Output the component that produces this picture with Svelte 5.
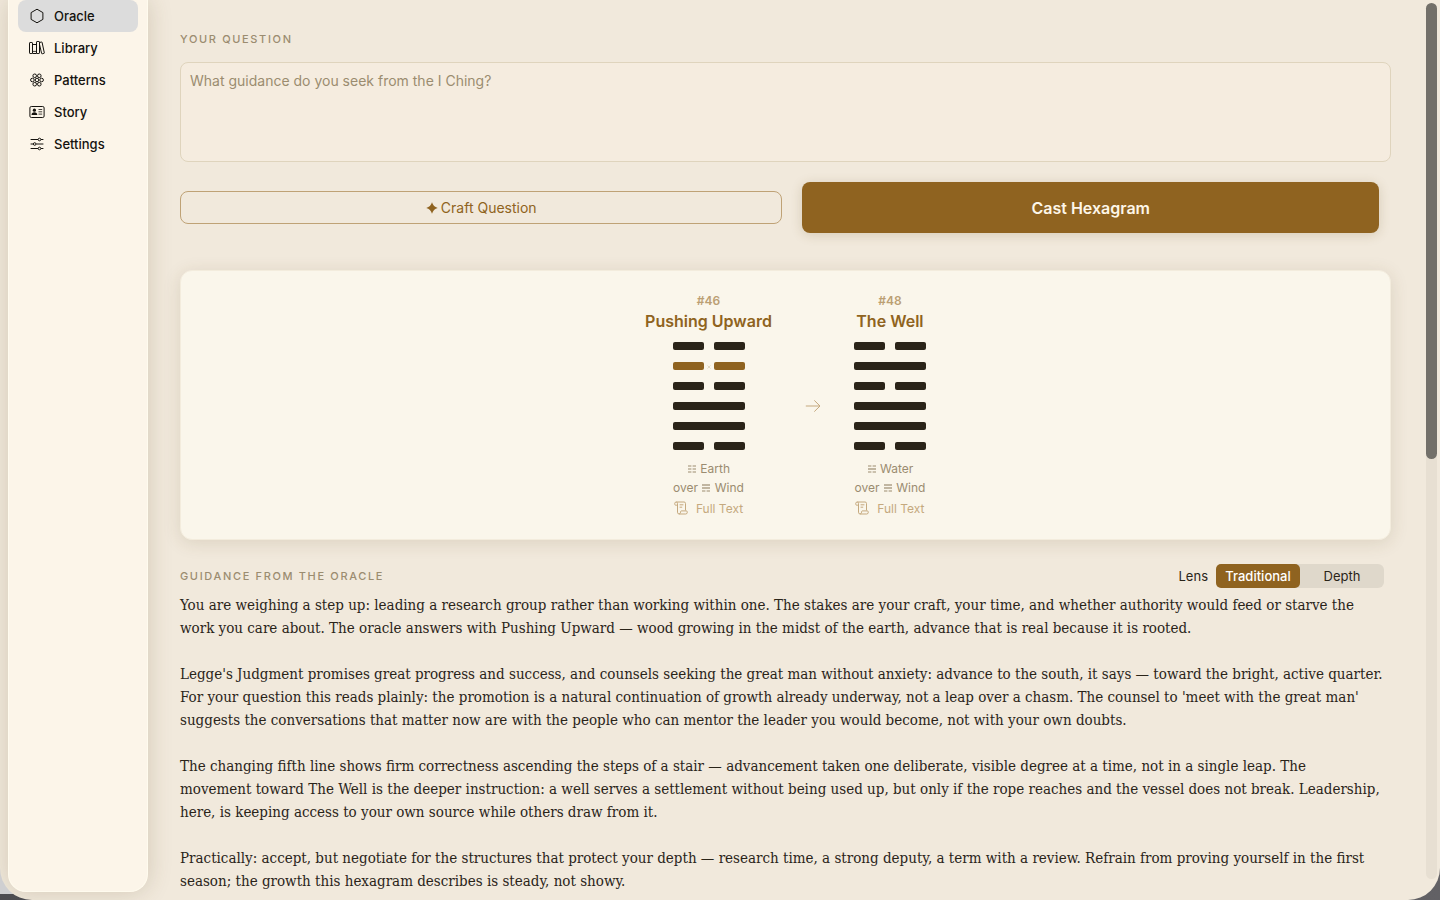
<script>
  let question = $state('');
  let active = $state('Oracle');
  let lens = $state('Traditional');

  const pages = ['Oracle', 'Library', 'Patterns', 'Story', 'Settings'];
  const lenses = ['Traditional', 'Depth'];

  // lines run from top to bottom, 1 = solid, 0 = broken
  const hexagrams = [
    {
      number: 46,
      name: 'Pushing Upward',
      lines: [0, 0, 0, 1, 1, 0],
      changing: 1,
      upper: { name: 'Earth', lines: [0, 0, 0] },
      lower: { name: 'Wind', lines: [1, 1, 0] },
    },
    {
      number: 48,
      name: 'The Well',
      lines: [0, 1, 0, 1, 1, 0],
      changing: -1,
      upper: { name: 'Water', lines: [0, 1, 0] },
      lower: { name: 'Wind', lines: [1, 1, 0] },
    },
  ];

  const guidance = [
    `You are weighing a step up: leading a research group rather than working within one. The stakes are your craft, your time, and whether authority would feed or starve the
work you care about. The oracle answers with Pushing Upward — wood growing in the midst of the earth, advance that is real because it is rooted.`,
    `Legge's Judgment promises great progress and success, and counsels seeking the great man without anxiety: advance to the south, it says — toward the bright, active quarter.
For your question this reads plainly: the promotion is a natural continuation of growth already underway, not a leap over a chasm. The counsel to 'meet with the great man'
suggests the conversations that matter now are with the people who can mentor the leader you would become, not with your own doubts.`,
    `The changing fifth line shows firm correctness ascending the steps of a stair — advancement taken one deliberate, visible degree at a time, not in a single leap. The
movement toward The Well is the deeper instruction: a well serves a settlement without being used up, but only if the rope reaches and the vessel does not break. Leadership,
here, is keeping access to your own source while others draw from it.`,
    `Practically: accept, but negotiate for the structures that protect your depth — research time, a strong deputy, a term with a review. Refrain from proving yourself in the first
season; the growth this hexagram describes is steady, not showy.`,
  ];
</script>

{#snippet trigram(lines)}
  <svg class="trigram" viewBox="0 0 8 8" aria-hidden="true">
    {#each lines as line, i}
      <path d={line ? `M0 ${i * 3 + 1}h8` : `M0 ${i * 3 + 1}h3.4M4.6 ${i * 3 + 1}h3.4`} />
    {/each}
  </svg>
{/snippet}

<div class="desktop">
  <div class="window">
    <nav class="sidebar">
      {#each pages as page}
        <button
          type="button"
          class="nav-item"
          class:active={active === page}
          onclick={() => (active = page)}>
          <svg viewBox="0 0 16 16" aria-hidden="true">
            {#if page === 'Oracle'}
              <path d="M8 1.2 13.9 4.6v6.8L8 14.8 2.1 11.4V4.6z" />
            {:else if page === 'Library'}
              <rect x=".5" y="2.5" width="3" height="11" rx=".6" />
              <rect x="3.5" y="4.5" width="4" height="9" rx=".5" />
              <rect x="7.5" y="1.5" width="3" height="12" rx=".6" />
              <path d="M10.5 2.5l2-.5q.5-.1.6.4l2.2 10.4q.1.5-.4.6l-1.7.4q-.5.1-.6-.4L10.5 4.4" />
              <path class="thin" d="M3.6 11.4h3.8" />
            {:else if page === 'Patterns'}
              <circle cx="8" cy="8" r="1.8" />
              <circle cx="3.4" cy="8" r="1.8" />
              <circle cx="12.6" cy="8" r="1.8" />
              <circle cx="5.7" cy="3.8" r="1.8" />
              <circle cx="10.3" cy="3.8" r="1.8" />
              <circle cx="5.7" cy="12.2" r="1.8" />
              <circle cx="10.3" cy="12.2" r="1.8" />
            {:else if page === 'Story'}
              <rect x=".9" y="2.5" width="14.2" height="11" rx="1.4" />
              <circle class="solid" cx="5.4" cy="6.2" r="1.6" />
              <path class="solid" d="M2.5 11q.2-2.8 2.9-2.8T8.3 11z" />
              <path class="thin" d="M9.5 5.5h3.7M9.5 7.8h3.7M9.5 10.1h3.7" />
            {:else}
              <path d="M1.6 3.5h7.4M12 3.5h2.4M1.6 8h2.6M7.2 8h7.2M1.6 12.5h7.4M12 12.5h2.4" />
              <circle cx="10.5" cy="3.5" r="1.3" />
              <circle cx="5.7" cy="8" r="1.3" />
              <circle cx="10.5" cy="12.5" r="1.3" />
            {/if}
          </svg>
          {page}
        </button>
      {/each}
    </nav>

    <main>
      <label class="caption" for="question">YOUR QUESTION</label>
      <textarea
        id="question"
        placeholder="What guidance do you seek from the I Ching?"
        bind:value={question}></textarea>

      <div class="actions">
        <button type="button" class="craft">
          <svg viewBox="0 0 12 12" aria-hidden="true">
            <path d="M6 .3Q7.3 4.7 11.7 6 7.3 7.3 6 11.7 4.7 7.3.3 6 4.7 4.7 6 .3z" />
          </svg>
          Craft Question
        </button>
        <button type="button" class="cast">Cast Hexagram</button>
      </div>

      <section class="reading">
        {#each hexagrams as hexagram, i}
          {#if i > 0}
            <svg class="arrow" viewBox="0 0 16 16" aria-hidden="true">
              <path d="M.8 8h14M9.3 2.4 15 8l-5.7 5.6" />
            </svg>
          {/if}
          <div class="hexagram">
            <span class="number">#{hexagram.number}</span>
            <h2>{hexagram.name}</h2>
            <div class="lines">
              {#each hexagram.lines as solid, row}
                <div class="line" class:changing={row === hexagram.changing}>
                  <i></i>
                  {#if !solid}
                    {#if row === hexagram.changing}
                      <svg viewBox="0 0 4 4" aria-hidden="true"><path d="M.5.5l3 3M3.5.5l-3 3" /></svg>
                    {/if}
                    <i></i>
                  {/if}
                </div>
              {/each}
            </div>
            <p class="trigrams">
              <span>{@render trigram(hexagram.upper.lines)} {hexagram.upper.name}</span>
              <span>over {@render trigram(hexagram.lower.lines)} {hexagram.lower.name}</span>
            </p>
            <button type="button" class="full-text">
              <svg viewBox="0 0 14 14" aria-hidden="true">
                <path d="M2.9 4.2H1.6Q.7 4.2.7 2.6T2.3 1h7.8q1.4 0 1.4 1.5v6.9M2.3 1q1.2 0 1.2 1.6v8.6q0 1.8 1.6 1.8h6.6q1.6 0 1.6-1.8 0-1.3-1-1.3H7.2q-.6 0-.6 1.3T5.1 13M5.6 3.8h3.8M5.6 6.2h2.6" />
              </svg>
              Full Text
            </button>
          </div>
        {/each}
      </section>

      <div class="guidance-head">
        <h3 class="caption">GUIDANCE FROM THE ORACLE</h3>
        <div class="lens" role="group" aria-labelledby="lens-label">
          <span id="lens-label">Lens</span>
          <div class="segments">
            {#each lenses as item}
              <button
                type="button"
                class:selected={lens === item}
                aria-pressed={lens === item}
                onclick={() => (lens = item)}>{item}</button>
            {/each}
          </div>
        </div>
      </div>

      <article>
        {#each guidance as paragraph}
          <p>{paragraph}</p>
        {/each}
      </article>
    </main>

    <div class="scrollbar" aria-hidden="true"><div class="thumb"></div></div>
  </div>
</div>

<style>
  :global(body) {
    margin: 0;
  }

  .desktop,
  .desktop * {
    box-sizing: border-box;
  }

  .desktop {
    height: 100vh;
    overflow: hidden;
    background:
      linear-gradient(#cfcfd1, #cfcfd1) 0 0 / 20px calc(100% - 6px) no-repeat,
      linear-gradient(90deg, #4c4c50, #626165);
    font-family: Inter, 'Liberation Sans', sans-serif;
    color: #2a2419;
  }

  .window {
    display: flex;
    height: 100%;
    overflow: hidden;
    background: #f1e9dc;
    border-radius: 0 0 32px 32px;
  }

  button {
    padding: 0;
    font-family: inherit;
    cursor: pointer;
  }

  h2,
  h3,
  p {
    margin: 0;
  }

  .sidebar {
    flex: none;
    width: 140px;
    margin: 0 0 8px 8px;
    padding: 0 9px;
    background: #fcf5e9;
    border: 1px solid #fffbee;
    border-top: 0;
    border-radius: 0 0 18px 18px;
    box-shadow: 0 0 24px rgba(90, 70, 30, 0.2);
  }

  .nav-item {
    display: flex;
    align-items: center;
    gap: 9px;
    width: 100%;
    height: 32px;
    padding: 0 11px;
    border: 0;
    border-radius: 8px;
    background: none;
    color: #14120e;
    font-size: 13px;
    font-weight: 500;
  }

  .nav-item.active {
    background: #dcdcdc;
  }

  .nav-item svg {
    width: 16px;
    height: 16px;
    fill: none;
    stroke: currentColor;
    stroke-width: 1;
  }

  .nav-item .solid {
    fill: currentColor;
    stroke: none;
  }

  .nav-item .thin {
    stroke-width: 0.8;
  }

  main {
    flex: 1;
    min-width: 0;
    padding: 31px 35px 0 32px;
    overflow: hidden;
  }

  .caption {
    display: block;
    color: #9b8c70;
    font-size: 11px;
    font-weight: 500;
    line-height: 16px;
    letter-spacing: 0.15em;
  }

  textarea {
    display: block;
    width: 100%;
    height: 100px;
    margin-top: 15px;
    padding: 8px 9px;
    border: 1px solid #dfd4bd;
    border-radius: 8px;
    background: #f5ecdf;
    color: inherit;
    font-family: inherit;
    font-size: 14px;
    line-height: 20px;
    resize: none;
  }

  textarea::placeholder {
    color: #9b8c70;
    opacity: 1;
  }

  .actions {
    display: flex;
    align-items: center;
    gap: 20px;
    margin-top: 20px;
    padding-right: 12px;
  }

  .craft {
    display: flex;
    flex: 602;
    align-items: center;
    justify-content: center;
    gap: 3px;
    height: 33px;
    border: 1px solid #bfa276;
    border-radius: 8px;
    background: none;
    color: #8f6320;
    font-size: 14px;
  }

  .craft svg {
    width: 12px;
    height: 12px;
    fill: currentColor;
  }

  .cast {
    flex: 578;
    height: 51px;
    border: 0;
    border-radius: 8px;
    background: #8f6320;
    box-shadow: 0 2px 12px rgba(110, 85, 35, 0.2);
    color: #fdf6e8;
    font-size: 16px;
    font-weight: 600;
  }

  .reading {
    display: flex;
    align-items: center;
    justify-content: center;
    gap: 33px;
    margin-top: 37px;
    padding: 22px 20px 21px;
    border: 1px solid #f3ecdd;
    border-radius: 12px;
    background: #faf6eb;
    box-shadow: 0 3px 18px rgba(90, 70, 30, 0.14);
  }

  .hexagram {
    display: flex;
    flex-direction: column;
    align-items: center;
  }

  .number {
    color: #bb9f73;
    font-size: 12px;
    font-weight: 600;
    line-height: 16px;
  }

  h2 {
    margin-top: 1px;
    color: #8f6320;
    font-size: 16px;
    font-weight: 600;
    line-height: 22px;
  }

  .lines {
    display: grid;
    gap: 12px;
    width: 72px;
    margin-top: 10px;
  }

  .line {
    position: relative;
    display: flex;
    gap: 10px;
    height: 8px;
  }

  .line i {
    flex: 1;
    border-radius: 2px;
    background: #2a2419;
  }

  .line.changing i {
    background: #8f6320;
  }

  .line svg {
    position: absolute;
    top: 3px;
    left: 34px;
    width: 4px;
    height: 4px;
    stroke: #e3dac3;
  }

  .trigrams {
    display: grid;
    justify-items: center;
    margin-top: 9px;
    color: #9b8c70;
    font-size: 12px;
    line-height: 19px;
  }

  .trigram {
    width: 8px;
    height: 8px;
    margin: 0 1px;
    stroke: currentColor;
    stroke-width: 1.2;
  }

  .full-text {
    display: flex;
    align-items: center;
    gap: 8px;
    height: 20px;
    margin-top: 1px;
    border: 0;
    background: none;
    color: #c5a97e;
    font-size: 12px;
  }

  .full-text svg {
    width: 14px;
    height: 14px;
    fill: none;
    stroke: currentColor;
  }

  .arrow {
    width: 16px;
    height: 16px;
    fill: none;
    stroke: #c5a97e;
  }

  .guidance-head {
    display: flex;
    align-items: center;
    justify-content: space-between;
    margin-top: 24px;
    padding-right: 7px;
  }

  .lens {
    display: flex;
    align-items: center;
    gap: 8px;
    font-size: 13px;
  }

  .segments {
    display: flex;
    border-radius: 6px;
    background: #dfd8cb;
  }

  .segments button {
    width: 84px;
    height: 24px;
    border: 0;
    border-radius: 5px;
    background: none;
    color: #2a2419;
    font-size: 13px;
  }

  .segments .selected {
    background: #8f6320;
    color: #fff;
    font-weight: 500;
  }

  article {
    margin-top: 6px;
    font-family: Charter, 'DejaVu Serif Condensed', 'Liberation Serif', serif;
    font-size: 15px;
    line-height: 23px;
    white-space: pre-line;
  }

  article p + p {
    margin-top: 23px;
  }

  .scrollbar {
    flex: none;
    width: 11px;
    margin: 3px 3px 21px 0;
    border-radius: 6px;
    background: #e7dfd2;
  }

  .thumb {
    height: 52%;
    border-radius: 6px;
    background: #73706a;
  }
</style>
